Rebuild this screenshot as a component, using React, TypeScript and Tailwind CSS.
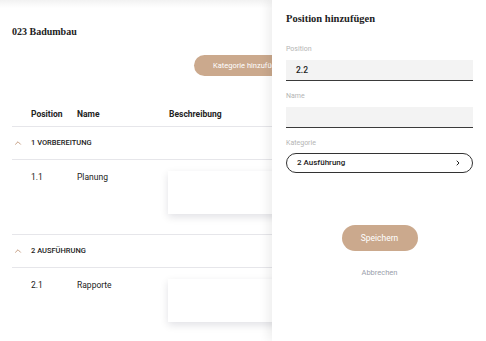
import { ChevronUp, ChevronRight } from 'lucide-react';

const rows = [
  { cat: '1 Vorbereitung', pos: '1.1', name: 'Planung' },
  { cat: '2 Ausführung', pos: '2.1', name: 'Rapporte' },
];

function Field({ label, value }: { label: string; value?: string }) {
  return (
    <div className="flex flex-col">
      <span className="h-[20px] text-[7px] leading-[20px] text-[#b4b4b4]">{label}</span>
      <div className="mt-[1px] h-[21px] bg-[#f3f3f3] border-b-[1.5px] border-[#3a3a3a] px-[10px] flex items-center text-[8.5px] font-medium text-[#222]">
        {value}
      </div>
    </div>
  );
}

export default function App() {
  return (
    <div className="relative w-[486px] h-[341px] overflow-hidden bg-white font-['Roboto',sans-serif] text-[#222]">
      {/* page */}
      <div className="h-[8px] bg-gradient-to-b from-[#f2f2f2] to-white" />
      <div className="px-[12px]">
        <h1 className="mt-[17px] h-[14px] leading-[14px] text-[10px] font-bold font-['Liberation_Serif',serif]">023 Badumbau</h1>

        <div className="mt-[16px] flex">
          <button className="ml-[182px] h-[21px] w-[128px] shrink-0 rounded-full bg-[#cba98d] pl-[19px] text-left text-[7.5px] text-white">
            Kategorie hinzufügen
          </button>
        </div>

        <div className="mt-[27px] grid grid-cols-[46px_92px_1fr] pl-[19px] h-[24px] items-center text-[8.5px] font-bold border-b border-[#e6e6ea]">
          <span>Position</span>
          <span>Name</span>
          <span>Beschreibung</span>
        </div>

        {rows.map((r) => (
          <div key={r.pos}>
            <div className="h-[33px] flex items-center border-b border-[#e6e6ea] text-[7.5px] font-medium uppercase">
              <ChevronUp className="w-[10px] h-[10px] ml-[1px] mr-[8px] text-[#b07b55]" strokeWidth={1.75} />
              {r.cat}
            </div>
            <div className="h-[75px] grid grid-cols-[46px_91px_1fr] pl-[19px] pt-[11px] border-b border-[#e6e6ea] text-[8.5px]">
              <span className="leading-[12px]">{r.pos}</span>
              <span className="leading-[12px]">{r.name}</span>
              <div className="h-[43px] w-[200px] bg-white shadow-[0_3px_8px_rgba(0,0,40,0.12)]" />
            </div>
          </div>
        ))}
      </div>

      {/* drawer */}
      <aside className="absolute top-0 right-0 w-[214px] h-[341px] bg-white shadow-[-4px_0_10px_rgba(0,0,0,0.07)] pl-[14px] pr-[13px] flex flex-col">
        <h2 className="mt-[12px] h-[14px] leading-[14px] text-[10.5px] font-bold font-['Liberation_Serif',serif]">Position hinzufügen</h2>
        <div className="mt-[13px] flex flex-col gap-[5px]">
          <Field label="Position" value="2.2" />
          <Field label="Name" />
          <div className="flex flex-col">
            <span className="h-[20px] text-[7px] leading-[20px] text-[#b4b4b4]">Kategorie</span>
            <div className="h-[20px] rounded-full border border-[#333] pl-[10px] pr-[10px] flex items-center justify-between text-[8px] font-medium">
              2 Ausführung
              <ChevronRight className="w-[8px] h-[8px]" strokeWidth={3} />
            </div>
          </div>
        </div>
        <div className="mt-[52px] flex flex-col items-center">
          <button className="h-[26px] w-[76px] rounded-full bg-[#cba98d] text-[8.5px] text-white">Speichern</button>
          <span className="mt-[16px] text-[7.5px] text-[#9aa0ab]">Abbrechen</span>
        </div>
      </aside>
    </div>
  );
}
